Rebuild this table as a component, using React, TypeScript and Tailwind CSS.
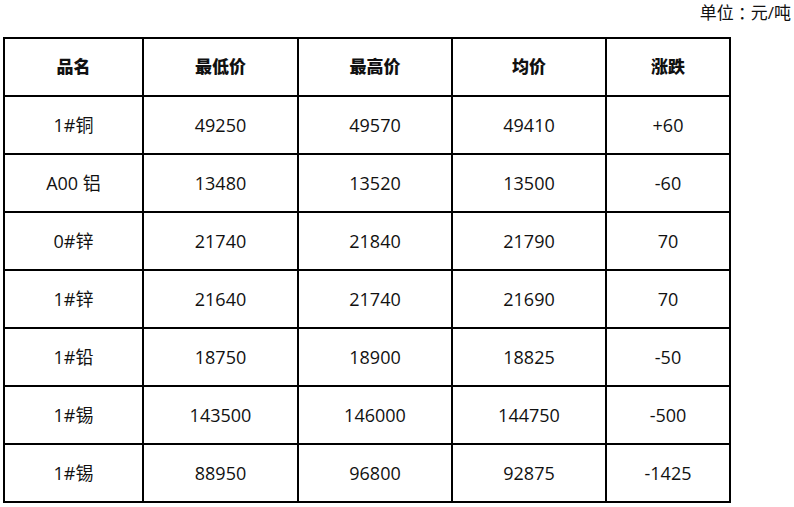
import React from "react";

const rows = [
  ["1#铜", "49250", "49570", "49410", "+60"],
  ["A00 铝", "13480", "13520", "13500", "-60"],
  ["0#锌", "21740", "21840", "21790", "70"],
  ["1#锌", "21640", "21740", "21690", "70"],
  ["1#铅", "18750", "18900", "18825", "-50"],
  ["1#锡", "143500", "146000", "144750", "-500"],
  ["1#锡", "88950", "96800", "92875", "-1425"],
];

const headers = ["品名", "最低价", "最高价", "均价", "涨跌"];
const widths = ["w-[139px]", "w-[155px]", "w-[154px]", "w-[154px]", "w-[124px]"];

export default function App() {
  return (
    <div
      className="w-[794px] h-[507px] bg-white text-[#111] overflow-hidden"
      style={{ fontFamily: '"Open Sans", "Noto Sans CJK SC", sans-serif' }}
    >
      <div className="flex justify-end pr-[3px] pt-[1px] h-[37px] text-[17px] leading-[24px]">
        <span>单位</span>
        <span style={{ fontFamily: '"Noto Sans CJK TC", sans-serif' }}>：</span>
        <span>元/吨</span>
      </div>
      <table className="ml-[3px] border-collapse table-fixed w-[728px] border-2 border-black">
        <colgroup>
          {widths.map((w, i) => (
            <col key={i} className={w} />
          ))}
        </colgroup>
        <thead>
          <tr className="h-[58px]">
            {headers.map((h) => (
              <th key={h} className="border-2 border-black text-center font-black text-[17px] p-0">
                {h}
              </th>
            ))}
          </tr>
        </thead>
        <tbody>
          {rows.map((r, i) => (
            <tr key={i} className="h-[58px]">
              {r.map((c, j) => (
                <td key={j} className="border-2 border-black text-center text-[18px] p-0">
                  {c}
                </td>
              ))}
            </tr>
          ))}
        </tbody>
      </table>
    </div>
  );
}
